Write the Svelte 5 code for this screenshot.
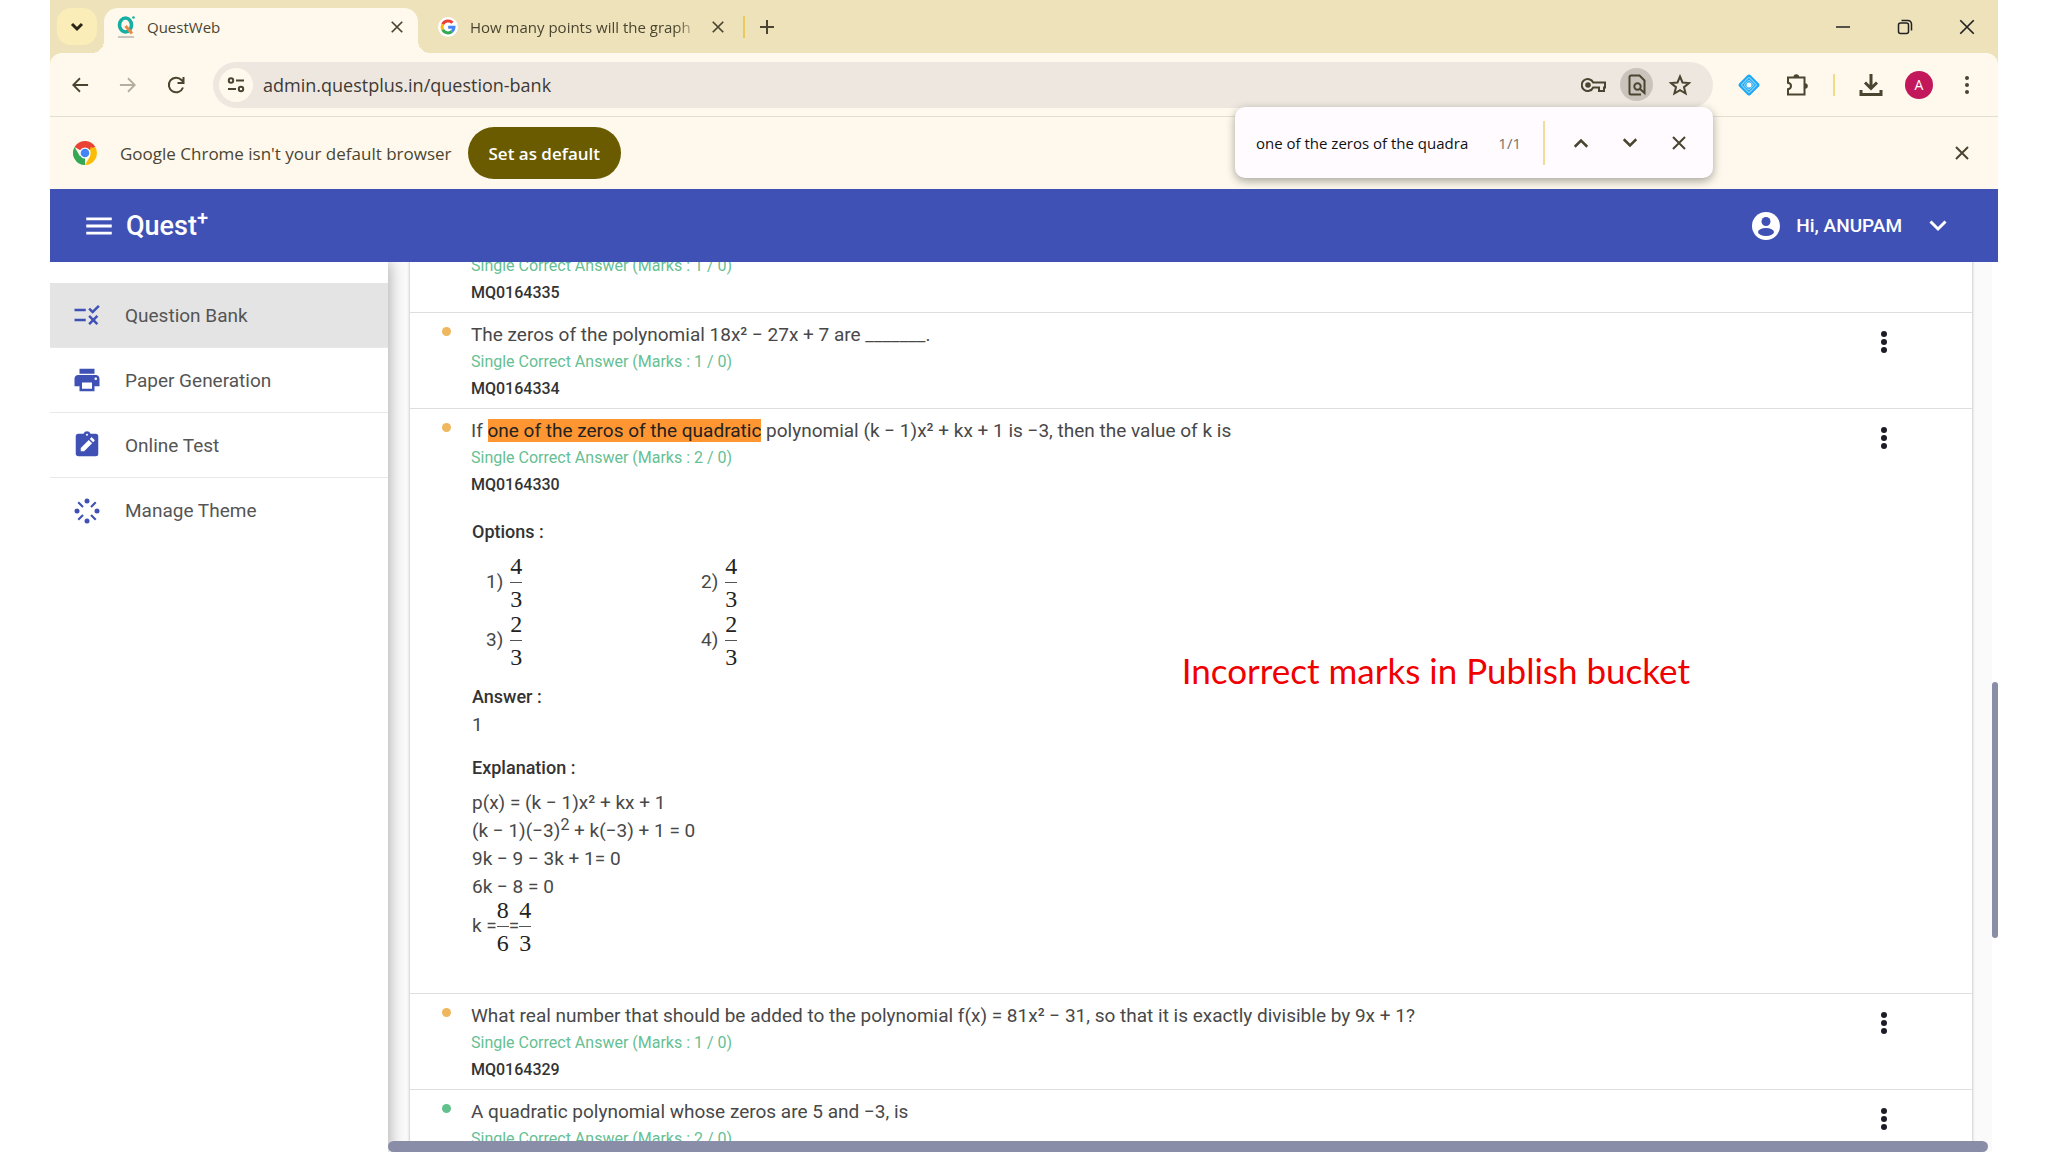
<script lang="ts">
	type Segment = { text: string; hit?: boolean };
	type Question = {
		id: string;
		level: 'easy' | 'medium';
		marks: string;
		title: Segment[];
		open?: boolean;
	};

	const menu = [
		{ label: 'Question Bank', icon: 'rule' },
		{ label: 'Paper Generation', icon: 'print' },
		{ label: 'Online Test', icon: 'clipboard' },
		{ label: 'Manage Theme', icon: 'burst' }
	];

	const questions: Question[] = [
		{
			id: 'MQ0164335',
			level: 'medium',
			marks: '1 / 0',
			title: []
		},
		{
			id: 'MQ0164334',
			level: 'medium',
			marks: '1 / 0',
			title: [{ text: 'The zeros of the polynomial 18x² − 27x + 7 are _______.' }]
		},
		{
			id: 'MQ0164330',
			level: 'medium',
			marks: '2 / 0',
			title: [
				{ text: 'If ' },
				{ text: 'one of the zeros of the quadratic', hit: true },
				{ text: ' polynomial (k − 1)x² + kx + 1 is −3, then the value of k is' }
			],
			open: true
		},
		{
			id: 'MQ0164329',
			level: 'medium',
			marks: '1 / 0',
			title: [
				{
					text: 'What real number that should be added to the polynomial f(x) = 81x² − 31, so that it is exactly divisible by 9x + 1?'
				}
			]
		},
		{
			id: 'MQ0164328',
			level: 'easy',
			marks: '2 / 0',
			title: [{ text: 'A quadratic polynomial whose zeros are 5 and −3, is' }]
		}
	];

	const options = [
		[4, 3],
		[4, 3],
		[2, 3],
		[2, 3]
	];

	let active = $state('Question Bank');
	let query = $state('one of the zeros of the quadratic');
	let address = $state('admin.questplus.in/question-bank');
</script>

{#snippet cross(size: number)}
	<svg class="line" width={size} height={size} viewBox="0 0 16 16"><path d="M2 2l12 12M14 2L2 14" /></svg>
{/snippet}

{#snippet chevron(size: number, up = false)}
	<svg class="line" width={size} height={size} viewBox="0 0 16 16">
		<path d={up ? 'M3 11l5-5 5 5' : 'M3 5l5 5 5-5'} />
	</svg>
{/snippet}

{#snippet fraction(top: number, bottom: number)}
	<span class="fraction"><span>{top}</span><span>{bottom}</span></span>
{/snippet}

{#snippet menuIcon(name: string)}
	<svg width="30" height="30" viewBox="0 0 24 24" fill="currentColor">
		{#if name === 'rule'}
			<path d="M16.5 11 13 7.5l1.4-1.4 2.1 2.1 4.3-4.3 1.4 1.4zM11 7H2v2h9zM21 13.4 19.6 12 17 14.6 14.4 12 13 13.4l2.6 2.6-2.6 2.6 1.4 1.4 2.6-2.6 2.6 2.6 1.4-1.4-2.6-2.6zM11 15H2v2h9z" />
		{:else if name === 'print'}
			<path d="M19 8H5c-1.66 0-3 1.34-3 3v6h4v4h12v-4h4v-6c0-1.66-1.34-3-3-3zm-3 11H8v-5h8v5zm3-7c-.55 0-1-.45-1-1s.45-1 1-1 1 .45 1 1-.45 1-1 1zm-1-9H6v4h12V3z" />
		{:else if name === 'clipboard'}
			<path d="M19 3h-4.2a3 3 0 0 0-5.6 0H5a2 2 0 0 0-2 2v14c0 1.1.9 2 2 2h14a2 2 0 0 0 2-2V5a2 2 0 0 0-2-2z" />
			<circle cx="12" cy="3.8" r=".8" fill="#fff" />
			<path fill="#fff" d="M7 17v-2.7l6.4-6.4 2.7 2.7L9.7 17zM14.2 7.1l1-1c.3-.3.7-.3 1 0l1.7 1.7c.3.3.3.7 0 1l-1 1z" />
		{:else}
			<g>
				<circle cx="12" cy="4" r="2" />
				<circle cx="20" cy="12" r="2" />
				<circle cx="12" cy="20" r="2" />
				<circle cx="4" cy="12" r="2" />
			</g>
			<path fill="none" stroke="currentColor" stroke-width="1.7" d="M15.2 8.8 19 5M15.2 15.2 19 19M8.8 15.2 5 19M8.8 8.8 5 5" />
		{/if}
	</svg>
{/snippet}

<div class="window">
	<div class="tab-strip">
		<button class="tab-search" aria-label="Search tabs">
			<svg class="line heavy" width="16" height="16" viewBox="0 0 16 16"><path d="M3 5l5 5 5-5" /></svg>
		</button>
		<div class="tab current">
			<svg width="18" height="24" viewBox="0 0 18 24">
				<ellipse cx="8.5" cy="10" rx="6" ry="7" fill="none" stroke="#14aea3" stroke-width="3.6" />
				<path d="M8.5 11l6.500 7.500" stroke="#e88a4e" stroke-width="3" />
				<circle cx="16.500" cy="2.500" r="1.300" fill="#14aea3" />
				<path d="M1 22h16" stroke="#b9b4ab" stroke-width="1.500" />
			</svg>
			<span class="tab-title">QuestWeb</span>
			<button aria-label="Close tab">{@render cross(14)}</button>
		</div>
		<div class="tab">
			<svg width="20" height="20" viewBox="0 0 20 20">
				<circle cx="10" cy="10" r="10" fill="#fff" />
				<g fill="none" stroke-width="3">
					<path stroke="#ea4335" d="M14.5 5.800A6 6 0 0 0 4.700 7.300" />
					<path stroke="#fbbc05" d="M4.700 7.300a6 6 0 0 0 0 5.400" />
					<path stroke="#34a853" d="M4.700 12.700a6 6 0 0 0 9.200 1.800" />
					<path stroke="#4285f4" d="M13.900 14.500A6 6 0 0 0 16 10.300H10.200" />
				</g>
			</svg>
			<span class="tab-title faded">How many points will the graph</span>
			<button aria-label="Close tab">{@render cross(14)}</button>
		</div>
		<span class="tab-divider"></span>
		<button class="new-tab" aria-label="New tab">
			<svg class="line" width="16" height="16" viewBox="0 0 16 16"><path d="M8 1v14M1 8h14" /></svg>
		</button>
		<div class="window-buttons">
			<button aria-label="Minimize">
				<svg class="line" width="14" height="16" viewBox="0 0 14 16"><path d="M0 8h14" /></svg>
			</button>
			<button aria-label="Restore">
				<svg class="line" width="16" height="16" viewBox="0 0 16 16">
					<rect x="1.5" y="4" width="10" height="10.5" rx="2" />
					<path d="M4.5 1.5H11a3.5 3.5 0 0 1 3.5 3.5v6.5" />
				</svg>
			</button>
			<button aria-label="Close">{@render cross(18)}</button>
		</div>
	</div>

	<div class="toolbar">
		<button class="tool" aria-label="Back">
			<svg class="line" width="18" height="18" viewBox="0 0 20 20"><path d="M19 10H2.5M10 2.500L2.500 10l7.500 7.500" /></svg>
		</button>
		<button class="tool off" aria-label="Forward" disabled>
			<svg class="line" width="18" height="18" viewBox="0 0 20 20"><path d="M1 10h16.500M10 2.500l7.500 7.500-7.500 7.500" /></svg>
		</button>
		<button class="tool" aria-label="Reload">
			<svg class="line" width="20" height="20" viewBox="0 0 20 20">
				<path d="M17 12.500A7.300 7.300 0 1 1 15.500 5L17.500 7.500M17.500 2v6h-6" />
			</svg>
		</button>
		<div class="omnibox">
			<button class="site-info" aria-label="Site information">
				<svg class="line" width="18" height="16" viewBox="0 0 18 16">
					<circle cx="4" cy="3.5" r="2.200" />
					<path d="M9 3.500h8M1 12h8" />
					<circle cx="14" cy="12" r="2.200" />
				</svg>
			</button>
			<input class="address" aria-label="Address" bind:value={address} />
			<button class="badge" aria-label="Passwords">
				<svg class="line" width="26" height="18" viewBox="0 0 26 18">
					<path d="M12.200 6.500H24v5h-1V15h-5v-3.500h-5.800a6 6 0 1 1 0-5z" />
					<circle cx="7" cy="9" r="1.800" fill="currentColor" />
				</svg>
			</button>
			<button class="badge lit" aria-label="Find in page">
				<svg class="line" width="18" height="22" viewBox="0 0 18 22">
					<path d="M13 20.500H3A1.500 1.500 0 0 1 1.500 19V3A1.500 1.500 0 0 1 3 1.500h8.500l5 5V19l-5-4.500" />
					<circle cx="9.500" cy="12.500" r="3.200" />
				</svg>
			</button>
			<button class="badge" aria-label="Bookmark">
				<svg class="line" width="22" height="22" viewBox="0 0 22 22">
					<path d="M11 2.500l2.500 6 6.500.5-5 4.200 1.600 6.300-5.600-3.400-5.600 3.400L7 13.200 2 9l6.500-.5z" />
				</svg>
			</button>
		</div>
		<button class="tool extension" aria-label="Extension">
			<svg width="24" height="24" viewBox="0 0 24 24">
				<rect x="4" y="4" width="16" height="16" rx="2" transform="rotate(45 12 12)" fill="#1fa8f5" />
				<g fill="none" stroke="#8fd6fb">
					<rect x="6.500" y="6.500" width="11" height="11" rx="1" transform="rotate(45 12 12)" />
					<rect x="8.500" y="8.500" width="7" height="7" rx="1" transform="rotate(45 12 12)" />
				</g>
				<circle cx="12" cy="12" r="2.500" fill="#fff" />
			</svg>
		</button>
		<button class="tool" aria-label="Extensions">
			<svg class="line" width="24" height="24" viewBox="0 0 24 24">
				<path d="M3 4.500h16.500V21.500H3v-5.300c4-.7 4-5.700 0-6.400z" />
				<path fill="currentColor" stroke="none" d="M8.500 4a2.800 2.800 0 0 1 5.600 0zM20 10.200a2.800 2.800 0 0 1 0 5.600z" />
			</svg>
		</button>
		<span class="tool-divider"></span>
		<button class="tool" aria-label="Downloads">
			<svg class="line heavy" width="24" height="24" viewBox="0 0 24 24">
				<path d="M12 1v14M6 9.500l6 6 6-6M2 17v4.500h20V17" />
			</svg>
		</button>
		<button class="tool" aria-label="Profile"><span class="avatar">A</span></button>
		<button class="tool" aria-label="Chrome menu">
			<svg width="6" height="20" viewBox="0 0 6 20" fill="currentColor">
				<circle cx="3" cy="3" r="2" /><circle cx="3" cy="10" r="2" /><circle cx="3" cy="17" r="2" />
			</svg>
		</button>
	</div>

	<div class="infobar">
		<svg width="24" height="24" viewBox="0 0 24 24">
			<path fill="#ea4335" d="M12 12 1.600 6A12 12 0 0 1 22.400 6z" />
			<path fill="#34a853" d="M12 12 12 24A12 12 0 0 1 1.600 6l5.200 9z" />
			<path fill="#fbbc05" d="M17.200 9V6.500h5.400A12 12 0 0 1 12 24l5.200-9z" />
			<circle cx="12" cy="12" r="5.500" fill="#fff" />
			<circle cx="12" cy="12" r="4.300" fill="#4285f4" />
		</svg>
		<span class="notice">Google Chrome isn't your default browser</span>
		<button class="set-default">Set as default</button>
		<button class="dismiss" aria-label="Dismiss">{@render cross(16)}</button>
	</div>

	<div class="find-bar">
		<input aria-label="Find in page" bind:value={query} />
		<span class="count">1/1</span>
		<span class="find-divider"></span>
		<button aria-label="Previous">{@render chevron(20, true)}</button>
		<button aria-label="Next">{@render chevron(20)}</button>
		<button aria-label="Close find bar">{@render cross(16)}</button>
	</div>

	<header>
		<button class="burger" aria-label="Toggle menu">
			<svg width="34" height="34" viewBox="0 0 24 24" fill="currentColor">
				<path d="M3 18h18v-2H3v2zm0-5h18v-2H3v2zm0-7v2h18V6H3z" />
			</svg>
		</button>
		<span class="brand">Quest<sup>+</sup></span>
		<button class="account">
			<svg width="28" height="28" viewBox="0 0 28 28">
				<circle cx="14" cy="14" r="14" fill="#fff" />
				<circle cx="14" cy="9.500" r="4.500" fill="#3f51b5" />
				<ellipse cx="14" cy="20" rx="8" ry="4" fill="#3f51b5" />
			</svg>
			<span>Hi, ANUPAM</span>
			{@render chevron(24)}
		</button>
	</header>

	<div class="body">
		<nav>
			{#each menu as item}
				<a
					href="#{item.icon}"
					class:active={active === item.label}
					onclick={() => (active = item.label)}
				>
					{@render menuIcon(item.icon)}
					{item.label}
				</a>
			{/each}
		</nav>

		<main>
			<div class="list">
				{#each questions as question (question.id)}
					<article class:open={question.open}>
						<span class="dot {question.level}"></span>
						<div class="content">
							<p class="title">
								{#each question.title as part}
									{#if part.hit}<mark>{part.text}</mark>{:else}{part.text}{/if}
								{/each}
							</p>
							<p class="kind">Single Correct Answer (Marks : {question.marks})</p>
							<p class="id">{question.id}</p>

							{#if question.open}
								<div class="details">
									<h3>Options :</h3>
									<ol class="options">
										{#each options as [top, bottom], i}
											<li><span>{i + 1})</span>{@render fraction(top, bottom)}</li>
										{/each}
									</ol>
									<h3>Answer :</h3>
									<p>1</p>
									<h3 class="explanation">Explanation :</h3>
									<p>p(x) = (k − 1)x² + kx + 1</p>
									<p>(k − 1)(−3)<sup>2</sup> + k(−3) + 1 = 0</p>
									<p>9k − 9 − 3k + 1= 0</p>
									<p>6k − 8 = 0</p>
									<p class="result">k ={@render fraction(8, 6)}={@render fraction(4, 3)}</p>
								</div>
							{/if}
						</div>
						<button class="more" aria-label="Actions for {question.id}">
							<svg width="6" height="22" viewBox="0 0 6 22" fill="currentColor">
								<circle cx="3" cy="3" r="3" /><circle cx="3" cy="11" r="3" /><circle cx="3" cy="19" r="3" />
							</svg>
						</button>
						{#if question.open}
							<span class="note">Incorrect marks in Publish bucket</span>
						{/if}
					</article>
				{/each}
			</div>
			<span class="scroll-x"></span>
		</main>
		<span class="scroll-y"><span></span></span>
	</div>
</div>

<style>
	:global(body) {
		margin: 0;
		background: #fff;
	}

	.window {
		position: relative;
		display: flex;
		flex-direction: column;
		height: 100vh;
		margin: 0 50px;
		overflow: hidden;
		font-family: Roboto, sans-serif;
		color: #484848;
	}

	button {
		display: flex;
		align-items: center;
		justify-content: center;
		padding: 0;
		border: 0;
		background: none;
		color: inherit;
		font: inherit;
		cursor: pointer;
	}

	input {
		min-width: 0;
		padding: 0;
		border: 0;
		outline: 0;
		background: none;
		color: inherit;
		font: inherit;
	}

	svg {
		flex: none;
	}

	p,
	h3,
	ol {
		margin: 0;
		padding: 0;
	}

	.line {
		fill: none;
		stroke: currentColor;
		stroke-width: 2;
	}

	.line.heavy {
		stroke-width: 3;
	}

	.tab-strip,
	.toolbar,
	.infobar,
	.find-bar {
		font-family: 'Open Sans', 'Noto Sans', sans-serif;
		color: #4a4530;
	}

	/* browser tabs */
	.tab-strip {
		display: flex;
		flex: none;
		height: 45px;
		padding: 8px 0 0 7px;
		background: #eee2ba;
		font-size: 15px;
	}

	.tab-search {
		width: 40px;
		height: 37px;
		margin-right: 7px;
		border-radius: 14px;
		background: #fbedb8;
		color: #2a2616;
	}

	.tab {
		position: relative;
		display: flex;
		align-items: center;
		gap: 12px;
		box-sizing: border-box;
		width: 317px;
		height: 37px;
		padding: 0 10px 0 20px;
	}

	.tab.current {
		width: 314px;
		height: 45px;
		padding: 0 14px 8px 13px;
		border-radius: 14px 14px 0 0;
		background: #fef9ec;
	}

	.tab.current::before,
	.tab.current::after {
		content: '';
		position: absolute;
		bottom: 0;
		width: 12px;
		height: 12px;
	}

	.tab.current::before {
		right: 100%;
		background: radial-gradient(circle at 0 0, transparent 12px, #fef9ec 12px);
	}

	.tab.current::after {
		left: 100%;
		background: radial-gradient(circle at 100% 0, transparent 12px, #fef9ec 12px);
	}

	.tab-title {
		flex: 1;
		overflow: hidden;
		white-space: nowrap;
	}

	.tab-title.faded {
		mask-image: linear-gradient(to right, #000 90%, transparent);
	}

	.tab-divider {
		width: 2px;
		height: 22px;
		margin: 8px 11px 8px 8px;
		background: #e8cb5c;
	}

	.new-tab {
		width: 22px;
		height: 37px;
	}

	.window-buttons {
		display: flex;
		margin-left: auto;
		color: #222;
	}

	.window-buttons button {
		width: 62px;
		height: 37px;
	}

	.window-buttons .line {
		stroke-width: 1.5;
	}

	/* address bar */
	.toolbar {
		display: flex;
		flex: none;
		align-items: center;
		box-sizing: border-box;
		height: 64px;
		padding: 0 7px 0 6px;
		border-bottom: 1px solid #e2dfd2;
		border-radius: 12px 12px 0 0;
		background: #fef9ec;
		box-shadow: 0 -12px 0 #eee2ba;
		clip-path: inset(0);
	}

	.tool {
		width: 48px;
		height: 46px;
	}

	.tool.off {
		color: #b3af9f;
	}

	.extension {
		margin-left: 12px;
	}

	.tool-divider {
		width: 2px;
		height: 22px;
		margin: 0 12px;
		background: #f1dc83;
	}

	.avatar {
		width: 28px;
		border-radius: 50%;
		background: #c2185b;
		color: #fff;
		font-size: 14px;
		line-height: 28px;
	}

	.omnibox {
		display: flex;
		flex: 1;
		align-items: center;
		gap: 10px;
		box-sizing: border-box;
		height: 46px;
		margin-left: 13px;
		padding: 0 17px 0 6px;
		border-radius: 23px;
		background: #eee7e0;
	}

	.site-info {
		width: 34px;
		height: 34px;
		border-radius: 50%;
		background: #fef9ec;
	}

	.address {
		flex: 1;
		color: #3d3a35;
		font-size: 18px;
	}

	.badge {
		width: 33px;
		height: 33px;
		border-radius: 50%;
	}

	.badge.lit {
		background: #c9c3bc;
	}

	/* default browser prompt */
	.infobar {
		display: flex;
		flex: none;
		align-items: center;
		box-sizing: border-box;
		height: 72px;
		padding: 0 16px 0 23px;
		background: #fef9ec;
		font-size: 17px;
	}

	.notice {
		margin: 0 16px 0 23px;
	}

	.set-default {
		height: 52px;
		padding: 0 21px;
		border-radius: 26px;
		background: #6a5b00;
		color: #fff;
		font-weight: 600;
	}

	.dismiss {
		width: 40px;
		height: 40px;
		margin-left: auto;
	}

	.find-bar {
		position: absolute;
		top: 107px;
		right: 285px;
		z-index: 2;
		display: flex;
		align-items: center;
		box-sizing: border-box;
		width: 478px;
		height: 71px;
		padding: 0 10px 0 21px;
		border-radius: 10px;
		background: #fffbff;
		box-shadow: 0 3px 10px rgba(0, 0, 0, 0.35);
		font-size: 15px;
	}

	.find-bar input {
		flex: 1;
		color: #111;
	}

	.find-bar button {
		width: 49px;
		height: 48px;
	}

	.count {
		margin: 0 22px 0 30px;
		color: #77736a;
	}

	.find-divider {
		width: 2px;
		height: 44px;
		margin-right: 11px;
		background: #f1dc97;
	}

	/* application */
	header {
		display: flex;
		flex: none;
		align-items: center;
		box-sizing: border-box;
		height: 73px;
		padding: 0 48px 0 32px;
		background: #3f51b5;
		color: #fff;
	}

	.brand {
		margin-left: 10px;
		font-size: 27px;
		font-weight: 500;
	}

	.brand sup {
		font-size: 20px;
		line-height: 0;
	}

	.account {
		gap: 16px;
		margin-left: auto;
		font-size: 19px;
		font-weight: 500;
	}

	.account .line {
		margin-left: 8px;
	}

	.body {
		display: flex;
		flex: 1;
		min-height: 0;
	}

	nav {
		z-index: 1;
		flex: none;
		width: 338px;
		padding-top: 21px;
		background: #fff;
		box-shadow: 2px 0 14px rgba(0, 0, 0, 0.3);
		clip-path: inset(0 -24px 0 0);
	}

	nav a {
		display: flex;
		align-items: center;
		gap: 23px;
		box-sizing: border-box;
		height: 65px;
		padding-left: 22px;
		border-bottom: 1px solid #e8e8e8;
		color: #555;
		font-size: 19px;
		text-decoration: none;
	}

	nav a.active {
		background: #e4e4e4;
	}

	nav a:last-child {
		border-bottom: 0;
	}

	nav svg {
		color: #3f51b5;
	}

	main {
		position: relative;
		flex: 1;
		min-width: 0;
		padding: 0 20px 0 22px;
		overflow: hidden;
		background: #fafafa;
	}

	/* the list is scrolled part of a row down */
	.list {
		margin-top: -45px;
		background: #fff;
		box-shadow: 0 0 3px rgba(0, 0, 0, 0.3);
	}

	article {
		position: relative;
		display: flex;
		align-items: flex-start;
		box-sizing: border-box;
		min-height: 96px;
		padding: 8px 68px 6px 32px;
		border-bottom: 1px solid #dedede;
	}

	article.open {
		padding-bottom: 38px;
	}

	.dot {
		flex: none;
		width: 9px;
		height: 9px;
		margin: 6px 20px 0 0;
		border-radius: 50%;
	}

	.dot.medium {
		background: #efb75e;
	}

	.dot.easy {
		background: #62c08c;
	}

	.content {
		flex: 1;
	}

	.title {
		min-height: 27px;
		font-size: 19px;
		line-height: 27px;
	}

	mark {
		background: #ff9632;
		color: #222;
	}

	.kind,
	.id {
		font-size: 16px;
		line-height: 27px;
	}

	.kind {
		color: #66c093;
	}

	.id {
		color: #333;
		font-weight: 500;
	}

	.more {
		width: 40px;
		height: 42px;
		color: #1d1d27;
	}

	.details {
		margin: 20px 0 0 1px;
		font-size: 19px;
		line-height: 28px;
	}

	h3 {
		color: #333;
		font-size: 18px;
		font-weight: 500;
	}

	.explanation {
		margin: 15px 0 7px;
	}

	.details sup {
		font-size: 16px;
		line-height: 0;
	}

	.options {
		display: grid;
		grid-template-columns: 215px 215px;
		margin: 7px 0 14px;
		padding-left: 14px;
		list-style: none;
	}

	.options li,
	.result {
		display: flex;
		align-items: center;
		height: 58px;
	}

	.options li {
		gap: 7px;
	}

	.result {
		margin-top: -4px;
	}

	.fraction {
		display: flex;
		flex-direction: column;
		color: #222;
		font-family: 'Liberation Serif', serif;
		font-size: 24px;
		line-height: 32px;
	}

	.fraction span:first-child {
		border-bottom: 1px solid #555;
	}

	.note {
		position: absolute;
		top: 236px;
		right: 282px;
		color: #f00000;
		font-family: Lato, sans-serif;
		font-size: 35px;
		line-height: 50px;
	}

	.scroll-x {
		position: absolute;
		right: 4px;
		bottom: 0;
		left: 0;
		z-index: 1;
		height: 11px;
		border-radius: 6px;
		background: #8a8da8;
	}

	.scroll-y {
		flex: none;
		width: 6px;
		padding-top: 420px;
		background: #fff;
	}

	.scroll-y span {
		display: block;
		height: 256px;
		border-radius: 3px;
		background: #8a8da8;
	}
</style>
